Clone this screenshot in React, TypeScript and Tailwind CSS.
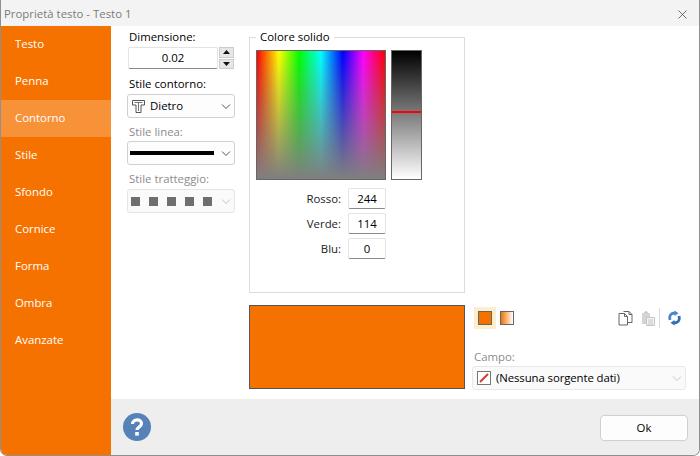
import { X } from 'lucide-react'

const menu = ['Testo', 'Penna', 'Contorno', 'Stile', 'Sfondo', 'Cornice', 'Forma', 'Ombra', 'Avanzate']

function Chevron({ faded }: { faded?: boolean }) {
  return (
    <svg width="12" height="7" viewBox="0 0 12 7" className="shrink-0">
      <path d="M2 1.5 L6 5.5 L10 1.5" fill="none" stroke={faded ? '#c4c4c4' : '#555'} strokeWidth="1" />
    </svg>
  )
}

function OutlineIcon() {
  return (
    <svg width="13" height="13" viewBox="0 0 13 13" className="shrink-0">
      <path d="M0.5 0.5 H12.5 V5 H9 V12.5 H4 V5 H0.5 Z" fill="#fff" stroke="#555" strokeWidth="1" />
      <path d="M2.5 2.5 H10.5 M6.5 2.5 V11" fill="none" stroke="#777" strokeWidth="1" />
    </svg>
  )
}

function ColorRow({ label, value }: { label: string; value: number }) {
  return (
    <div className="flex items-center h-[21px]">
      <span className="w-[85px] text-right text-[#222]">{label}</span>
      <div className="ml-[7px] w-[38px] h-[21px] flex items-center justify-center bg-white border border-[#e3e3e3] border-b-[#8a8a8a] rounded-[2px]">
        {value}
      </div>
    </div>
  )
}

function CopyIcon() {
  return (
    <svg width="15" height="16" viewBox="0 0 15 16">
      <path d="M5.5 1.5 H11 L14 4.5 V12.5 H10" fill="#fff" stroke="#666" />
      <path d="M1 3.5 H6.5 L9.5 6.5 V15 H1 Z" fill="#fff" stroke="#666" />
      <path d="M6.5 3.5 V6.5 H9.5 M11 1.5 V4.5 H14" fill="none" stroke="#666" />
    </svg>
  )
}

function PasteIcon() {
  return (
    <svg width="14" height="16" viewBox="0 0 14 16">
      <path d="M1 3 H9 V14 H1 Z" fill="#d4d4d4" />
      <path d="M3 3 C3 0.5 7 0.5 7 3 Z" fill="#c6c6c6" />
      <path d="M5.5 7.5 H13.5 V15.5 H5.5 Z" fill="#f4f4f4" stroke="#c4c4c4" />
      <path d="M7 10 H12 M7 12 H12 M7 14 H12" stroke="#c4c4c4" />
    </svg>
  )
}

function RefreshIcon() {
  return (
    <svg width="13" height="16" viewBox="0 0 13 16">
      <path d="M2 10 C0.8 5 3.5 3 7 3" fill="none" stroke="#4a86c8" strokeWidth="2.8" />
      <path d="M6.5 0.5 L10.5 3.2 L6.5 6 Z" fill="#4a86c8" />
      <path d="M11 6 C12.2 11 9.5 13 6 13" fill="none" stroke="#2f6fb4" strokeWidth="2.8" />
      <path d="M6.5 10 L2.5 12.8 L6.5 15.5 Z" fill="#2f6fb4" />
    </svg>
  )
}

export default function App() {
  return (
    <div className="w-[700px] h-[456px] flex flex-col overflow-hidden bg-white border-x border-b border-[#8f8f8f] rounded-b-[7px] text-[11.4px] leading-[16px] text-black font-['Open_Sans',sans-serif]">
      <div className="h-[26px] shrink-0 flex items-center justify-between pl-[3px] pr-[9px] pt-[2px] bg-[#f3f3f3] text-[#7b7b7b]">
        <span>Proprietà testo - Testo 1</span>
        <X size={15} strokeWidth={1.2} className="text-[#444]" />
      </div>

      <div className="flex flex-1 min-h-0">
        <nav className="w-[110px] shrink-0 bg-[#f57200] text-white">
          {menu.map((item) => (
            <div
              key={item}
              className={'h-[37px] flex items-center pl-[14px] pb-[2px] ' + (item === 'Contorno' ? 'bg-[#f79239]' : '')}
            >
              {item}
            </div>
          ))}
        </nav>

        <div className="flex flex-col flex-1 min-w-0">
          <div className="flex flex-1 min-h-0">
            <div className="w-[108px] ml-[16px] mr-[14px] shrink-0 pt-[3px]">
              <div className="pl-[2px] h-[17px]">Dimensione:</div>
              <div className="flex gap-[1px] pl-[1px] h-[22px] mt-[1px]">
                <div className="w-[90px] flex items-center justify-center bg-white border border-[#e3e3e3] border-b-[#8a8a8a] rounded-[2px]">
                  0.02
                </div>
                <div className="w-[15px] flex flex-col gap-[1px]">
                  <div className="flex-1 flex items-center justify-center bg-[#e6e6e6] border border-[#cccccc]">
                    <svg width="7" height="4" viewBox="0 0 7 4">
                      <path d="M3.5 0 L7 4 H0 Z" fill="#111" />
                    </svg>
                  </div>
                  <div className="flex-1 flex items-center justify-center bg-[#e6e6e6] border border-[#cccccc]">
                    <svg width="7" height="4" viewBox="0 0 7 4">
                      <path d="M0 0 H7 L3.5 4 Z" fill="#111" />
                    </svg>
                  </div>
                </div>
              </div>

              <div className="pl-[2px] mt-[5px] h-[18px] flex items-end">Stile contorno:</div>
              <div className="h-[24px] mt-[2px] flex items-center justify-between pl-[4px] pr-[2px] bg-[#fdfdfd] border border-[#d0d0d0] rounded-[3px]">
                <div className="flex items-center gap-[5px]">
                  <OutlineIcon />
                  <span>Dietro</span>
                </div>
                <Chevron />
              </div>

              <div className="pl-[2px] mt-[4px] h-[18px] flex items-end text-[#8c8c8c]">Stile linea:</div>
              <div className="h-[24px] mt-[1px] flex items-center justify-between pl-[2px] pr-[2px] bg-[#fdfdfd] border border-[#d0d0d0] rounded-[3px]">
                <div className="w-[84px] h-[4px] bg-black" />
                <Chevron />
              </div>

              <div className="pl-[2px] mt-[4px] h-[18px] flex items-end text-[#8c8c8c]">Stile tratteggio:</div>
              <div className="h-[24px] mt-[2px] flex items-center justify-between pl-[3px] pr-[2px] bg-[#fafafa] border border-[#e5e5e5] rounded-[3px]">
                <div className="flex gap-[9px]">
                  <div className="w-[9px] h-[9px] bg-[#6e6e6e]" />
                  <div className="w-[9px] h-[9px] bg-[#6e6e6e]" />
                  <div className="w-[9px] h-[9px] bg-[#6e6e6e]" />
                  <div className="w-[9px] h-[9px] bg-[#6e6e6e]" />
                  <div className="w-[9px] h-[9px] bg-[#6e6e6e]" />
                </div>
                <Chevron faded />
              </div>
            </div>

            <div className="w-[216px] shrink-0 pt-[3px]">
              <fieldset className="h-[264px] border border-[#dcdcdc] pl-[6px]">
                <legend className="ml-0 px-[4px] leading-[16px]">Colore solido</legend>
                <div className="flex gap-[5px] mt-[5px]">
                  <div className="w-[130px] h-[130px] border border-[#666] bg-[linear-gradient(to_bottom,rgba(127,127,127,0),#7f7f7f),linear-gradient(to_right,#ff0000,#ffff00_17%,#00ff00_33%,#00ffff_50%,#0000ff_67%,#ff00ff_83%,#ff0000)]" />
                  <div className="relative w-[31px] h-[130px] border border-[#666] bg-[linear-gradient(to_bottom,#000,#fff)]">
                    <div className="absolute left-0 right-0 top-[60px] h-[2px] bg-[#ff0000]" />
                  </div>
                </div>
                <div className="flex flex-col gap-[4px] mt-[8px]">
                  <ColorRow label="Rosso:" value={244} />
                  <ColorRow label="Verde:" value={114} />
                  <ColorRow label="Blu:" value={0} />
                </div>
              </fieldset>

              <div className="h-[84px] mt-[12px] bg-[#f57200] border border-[#555]" />
            </div>

            <div className="w-[214px] ml-[7px] shrink-0 pt-[281px]">
              <div className="flex items-center h-[22px]">
                <div className="w-[22px] h-[22px] flex items-center justify-center bg-[#fdeecd] ml-[2px]">
                  <div className="w-[14px] h-[14px] bg-[#f57200] border border-[#666]" />
                </div>
                <div className="w-[14px] h-[14px] ml-[4px] border border-[#666] bg-[linear-gradient(to_right,#f57200,#ffffff)]" />
                <div className="flex-1" />
                <CopyIcon />
                <div className="ml-[8px]">
                  <PasteIcon />
                </div>
                <div className="w-[1px] h-[20px] ml-[4px] bg-[#dcdcdc]" />
                <div className="ml-[8px] mr-[5px]">
                  <RefreshIcon />
                </div>
              </div>
              <div className="mt-[20px] pl-[2px] h-[17px] text-[#8c8c8c]">Campo:</div>
              <div className="h-[24px] flex items-center justify-between pl-[4px] pr-[2px] bg-[#fafafa] border border-[#e8e8e8] rounded-[3px]">
                <div className="flex items-center gap-[5px]">
                  <svg width="14" height="14" viewBox="0 0 14 14" className="shrink-0">
                    <rect x="0.5" y="0.5" width="13" height="13" fill="#fff" stroke="#777" />
                    <path d="M3 11 L11 3" stroke="#d8392b" strokeWidth="2" />
                  </svg>
                  <span className="tracking-[-0.1px]">(Nessuna sorgente dati)</span>
                </div>
                <Chevron faded />
              </div>
            </div>
          </div>

          <div className="h-[56px] shrink-0 flex items-center justify-between pl-[12px] pr-[11px] bg-[#eeeeee]">
            <svg width="28" height="28" viewBox="0 0 28 28">
              <circle cx="14" cy="14" r="14" fill="#5681b9" />
              <path d="M9.5 11 C9.5 5.5 18.5 5.5 18.5 10.5 C18.5 14 14 14 14 17" fill="none" stroke="#fff" strokeWidth="3.2" />
              <rect x="12.2" y="19" width="3.6" height="3.6" fill="#fff" />
            </svg>
            <div className="w-[88px] h-[26px] mt-[1px] flex items-center justify-center bg-[#fdfdfd] border border-[#d0d0d0] rounded-[4px]">
              Ok
            </div>
          </div>
        </div>
      </div>
    </div>
  )
}
